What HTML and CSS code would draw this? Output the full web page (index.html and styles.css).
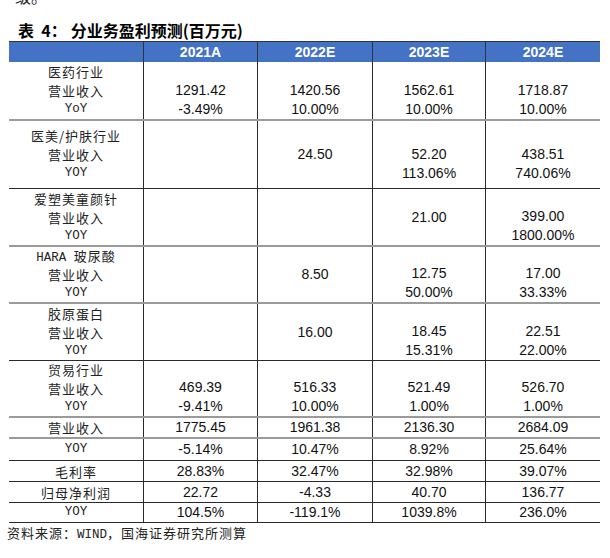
FILE: index.html
```html
<!DOCTYPE html>
<html lang="zh-CN">
<head>
<meta charset="utf-8">
<title>分业务盈利预测</title>
<link rel="stylesheet" href="styles.css">
</head>
<body>
<div class="page">
  <p class="prev"><span>级。</span></p>
  <h2 class="title">表  4：<span class="title-main">分业务盈利预测(百万元)</span></h2>
  <div class="table">
    <div class="row head">
      <div class="cell c0"></div>
      <div class="cell c1">2021A</div>
      <div class="cell c2">2022E</div>
      <div class="cell c3">2023E</div>
      <div class="cell c4">2024E</div>
    </div>

    <div class="row grp h59 gray">
      <div class="cell c0 label"><span>医药行业</span><span>营业收入</span><span class="en">YoY</span></div>
      <div class="cell c1 num"><span></span><span>1291.42</span><span>-3.49%</span></div>
      <div class="cell c2 num"><span></span><span>1420.56</span><span>10.00%</span></div>
      <div class="cell c3 num"><span></span><span>1562.61</span><span>10.00%</span></div>
      <div class="cell c4 num"><span></span><span>1718.87</span><span>10.00%</span></div>
    </div>

    <div class="row grp h68 dark">
      <div class="cell c0 label"><span>医美/护肤行业</span><span>营业收入</span><span class="en">YOY</span></div>
      <div class="cell c1 num"><span></span><span></span><span></span></div>
      <div class="cell c2 num"><span></span><span>24.50</span><span></span></div>
      <div class="cell c3 num"><span></span><span>52.20</span><span>113.06%</span></div>
      <div class="cell c4 num"><span></span><span>438.51</span><span>740.06%</span></div>
    </div>

    <div class="row grp h58 gray">
      <div class="cell c0 label"><span>爱塑美童颜针</span><span>营业收入</span><span class="en">YOY</span></div>
      <div class="cell c1 num"><span></span><span></span><span></span></div>
      <div class="cell c2 num"><span></span><span></span><span></span></div>
      <div class="cell c3 num"><span></span><span>21.00</span><span></span></div>
      <div class="cell c4 num"><span></span><span>399.00</span><span>1800.00%</span></div>
    </div>

    <div class="row grp h57 gray">
      <div class="cell c0 label"><span><span class="en">HARA </span>玻尿酸</span><span>营业收入</span><span class="en">YOY</span></div>
      <div class="cell c1 num"><span></span><span></span><span></span></div>
      <div class="cell c2 num"><span></span><span>8.50</span><span></span></div>
      <div class="cell c3 num"><span></span><span>12.75</span><span>50.00%</span></div>
      <div class="cell c4 num"><span></span><span>17.00</span><span>33.33%</span></div>
    </div>

    <div class="row grp h57 dark">
      <div class="cell c0 label"><span>胶原蛋白</span><span>营业收入</span><span class="en">YOY</span></div>
      <div class="cell c1 num"><span></span><span></span><span></span></div>
      <div class="cell c2 num"><span></span><span>16.00</span><span></span></div>
      <div class="cell c3 num"><span></span><span>18.45</span><span>15.31%</span></div>
      <div class="cell c4 num"><span></span><span>22.51</span><span>22.00%</span></div>
    </div>

    <div class="row grp h57 gray">
      <div class="cell c0 label"><span>贸易行业</span><span>营业收入</span><span class="en">YOY</span></div>
      <div class="cell c1 num"><span></span><span>469.39</span><span>-9.41%</span></div>
      <div class="cell c2 num"><span></span><span>516.33</span><span>10.00%</span></div>
      <div class="cell c3 num"><span></span><span>521.49</span><span>1.00%</span></div>
      <div class="cell c4 num"><span></span><span>526.70</span><span>1.00%</span></div>
    </div>

    <div class="row single h21 gray">
      <div class="cell c0 label">营业收入</div>
      <div class="cell c1 num">1775.45</div>
      <div class="cell c2 num">1961.38</div>
      <div class="cell c3 num">2136.30</div>
      <div class="cell c4 num">2684.09</div>
    </div>
    <div class="row single h22 dark">
      <div class="cell c0 label en">YOY</div>
      <div class="cell c1 num">-5.14%</div>
      <div class="cell c2 num">10.47%</div>
      <div class="cell c3 num">8.92%</div>
      <div class="cell c4 num">25.64%</div>
    </div>
    <div class="row single h21 dark">
      <div class="cell c0 label">毛利率</div>
      <div class="cell c1 num">28.83%</div>
      <div class="cell c2 num">32.47%</div>
      <div class="cell c3 num">32.98%</div>
      <div class="cell c4 num">39.07%</div>
    </div>
    <div class="row single h21 dark">
      <div class="cell c0 label">归母净利润</div>
      <div class="cell c1 num">22.72</div>
      <div class="cell c2 num">-4.33</div>
      <div class="cell c3 num">40.70</div>
      <div class="cell c4 num">136.77</div>
    </div>
    <div class="row single h20 dark">
      <div class="cell c0 label en">YOY</div>
      <div class="cell c1 num">104.5%</div>
      <div class="cell c2 num">-119.1%</div>
      <div class="cell c3 num">1039.8%</div>
      <div class="cell c4 num">236.0%</div>
    </div>
  </div>
  <p class="source">资料来源：<span class="en">WIND</span>，国海证券研究所测算</p>
</div>
</body>
</html>
```

FILE: styles.css
```css
html, body {
  margin: 0;
  padding: 0;
  background: #ffffff;
}

.page {
  width: 610px;
  color: #1a1a1a;
  font-family: "Noto Sans CJK SC", "Noto Sans", sans-serif;
}

.prev {
  margin: 0;
  height: 20px;
  overflow: hidden;
  padding-left: 15px;
  font-size: 16px;
  line-height: 16px;
  color: #222;
}

.prev span {
  display: block;
  margin-top: -12px;
}

.title {
  margin: 0;
  height: 21px;
  padding-left: 18px;
  font-size: 16px;
  line-height: 21px;
  font-weight: bold;
  white-space: pre;
  color: #000;
}

.title-main {
  margin-left: 4px;
}

.table {
  margin-left: 9px;
  width: 591px;
  border-top: 1px solid #333;
}

.row {
  display: flex;
  box-sizing: border-box;
}

.row.gray {
  border-bottom: 2px solid #9a9a9a;
}

.row.dark {
  border-bottom: 1px solid #2a2a2a;
}

.h59 { height: 59px; }
.h68 { height: 68px; }
.h58 { height: 58px; }
.h57 { height: 57px; }
.h22 { height: 22px; }
.h21 { height: 21px; }
.h20 { height: 20px; }

.cell {
  box-sizing: border-box;
  display: flex;
  flex-direction: column;
  align-items: center;
  justify-content: center;
  text-align: center;
}

.cell + .cell {
  border-left: 1px solid #2a2a2a;
}

.c0 { width: 134px; }
.c1 { width: 114px; }
.c2 { width: 115px; }
.c3 { width: 113px; }
.c4 { width: 115px; }

.head {
  height: 20px;
  background: #4472c4;
  color: #ffffff;
  font-family: "Liberation Sans", Arial, sans-serif;
  font-weight: bold;
  font-size: 14px;
  line-height: 20px;
}

.head .cell + .cell {
  border-left-color: #333;
}

.grp .cell span {
  display: block;
  height: 19px;
  line-height: 19px;
}

.grp .cell span span {
  display: inline;
}

.label {
  font-family: "Noto Sans CJK SC", sans-serif;
  font-size: 13px;
  letter-spacing: 1px;
  color: #222;
}

.en {
  font-family: "Liberation Mono", "DejaVu Sans Mono", monospace;
  font-size: 12.5px;
  letter-spacing: 0;
}

.num {
  font-family: "Liberation Sans", Arial, sans-serif;
  font-size: 14px;
  color: #111;
}

.single .cell {
  line-height: 19px;
}

.source {
  margin: 0;
  padding-left: 7px;
  height: 20px;
  line-height: 20px;
  font-size: 13px;
  letter-spacing: 1px;
  color: #222;
}
```
